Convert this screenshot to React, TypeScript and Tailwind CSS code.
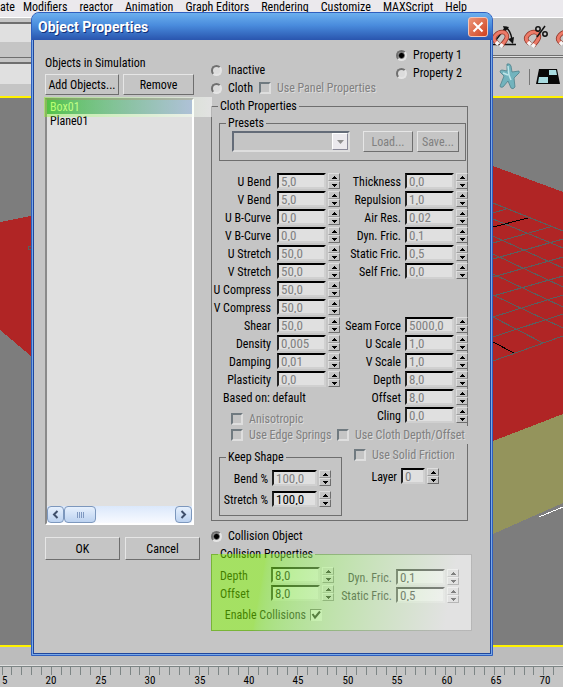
import type { ReactNode } from "react";

const leftFields: [string, string][] = [
  ["U Bend", "5,0"],
  ["V Bend", "5,0"],
  ["U B-Curve", "0,0"],
  ["V B-Curve", "0,0"],
  ["U Stretch", "50,0"],
  ["V Stretch", "50,0"],
  ["U Compress", "50,0"],
  ["V Compress", "50,0"],
  ["Shear", "50,0"],
  ["Density", "0,005"],
  ["Damping", "0,01"],
  ["Plasticity", "0,0"],
];

const frictionFields: [string, string][] = [
  ["Thickness", "0,0"],
  ["Repulsion", "1,0"],
  ["Air Res.", "0,02"],
  ["Dyn. Fric.", "0,1"],
  ["Static Fric.", "0,5"],
  ["Self Fric.", "0,0"],
];

const scaleFields: [string, string][] = [
  ["Seam Force", "5000,0"],
  ["U Scale", "1,0"],
  ["V Scale", "1,0"],
  ["Depth", "8,0"],
  ["Offset", "8,0"],
  ["Cling", "0,0"],
];

const menus = ["Modifiers", "reactor", "Animation", "Graph Editors", "Rendering", "Customize", "MAXScript", "Help"];

const gridLines = [
  "M493 105L563 133", "M493 121L563 150", "M493 138L563 170", "M493 156L563 189",
  "M493 176L563 209", "M493 197L563 230", "M493 219L543 245",
  "M493 115L506 111", "M493 145L550 129", "M493 161L563 141", "M493 179L563 159",
  "M493 198L563 178", "M493 219L563 197", "M493 239L563 216", "M493 263L563 238",
];

function Spinner({ label }: { label: string }) {
  return (
    <span className="flex h-4 w-3 shrink-0 flex-col">
      <button
        type="button"
        aria-label={`Increase ${label}`}
        className="flex h-2 w-full items-center justify-center border border-[#dedede] border-r-[#6e6e6e] border-b-[#9a9a9a]"
      >
        <svg width="5" height="3" viewBox="0 0 5 3" shapeRendering="crispEdges">
          <path d="M2 0h1v1h1v1h1v1H0V2h1V1h1z" />
        </svg>
      </button>
      <button
        type="button"
        aria-label={`Decrease ${label}`}
        className="flex h-2 w-full items-center justify-center border border-[#dedede] border-r-[#6e6e6e] border-b-[#6e6e6e]"
      >
        <svg width="5" height="3" viewBox="0 0 5 3" shapeRendering="crispEdges">
          <path d="M0 0h5v1H4v1H3v1H2V2H1V1H0z" />
        </svg>
      </button>
    </span>
  );
}

type FieldProps = { id: string; label: string; value: string; size?: string; tone?: string; labelClass?: string };

function Field({
  id,
  label,
  value,
  size = "w-[49px]",
  tone = "text-[#808080]",
  labelClass = "flex-1 pr-1 text-right",
}: FieldProps) {
  return (
    <div className="flex h-[18px] items-start">
      <label htmlFor={id} className={`leading-[18px] whitespace-nowrap ${labelClass}`}>
        {label}
      </label>
      <input
        id={id}
        defaultValue={value}
        className={`mr-0.5 h-4 shrink-0 border-2 border-t-black border-r-[#d0d0d0] border-b-[#d0d0d0] border-l-[#222222] bg-[#e0e0e0] pl-0.5 text-[13px] leading-3 outline-none ${size} ${tone}`}
      />
      <Spinner label={label} />
    </div>
  );
}

function Radio({ name, label, checked }: { name: string; label: string; checked?: boolean }) {
  return (
    <label className="flex h-[18px] items-center gap-1.5">
      <input
        type="radio"
        name={name}
        defaultChecked={checked}
        className="size-[11px] shrink-0 appearance-none rounded-full border-2 border-t-[#707070] border-r-[#e4e4e4] border-b-[#e4e4e4] border-l-[#707070] bg-[#dcdcdc] checked:bg-[radial-gradient(circle,#000_0_2px,#dcdcdc_4px)]"
      />
      {label}
    </label>
  );
}

function Check({ label }: { label: string }) {
  return (
    <label className="flex h-[18px] items-center gap-1.5 whitespace-nowrap text-[#808080] [text-shadow:1px_1px_0_#dedede]">
      <input
        type="checkbox"
        className="size-3 shrink-0 appearance-none border-2 border-t-[#707a80] border-r-[#dedede] border-b-[#dedede] border-l-[#707a80] bg-[#c5c5c5]"
      />
      {label}
    </label>
  );
}

function PushButton({ children, className }: { children: ReactNode; className: string }) {
  return (
    <button
      type="button"
      className={`border border-t-[#e6e6e6] border-r-[#6e6e6e] border-b-[#6e6e6e] border-l-[#e6e6e6] text-center whitespace-nowrap ${className}`}
    >
      {children}
    </button>
  );
}

function Group({ title, className, children }: { title: string; className: string; children: ReactNode }) {
  return (
    <fieldset className={`min-w-0 border border-[#6e6e6e] ${className}`}>
      <legend className="ml-1.5 px-0.5 leading-[14px]">{title}</legend>
      {children}
    </fieldset>
  );
}

function Magnet({ x }: { x: number }) {
  return (
    <g transform={`translate(${x} 0)`} fill="none">
      <path d="M8 29L12 24C16 19 13 15 9 15C5 15 -1 20 2 24L5 27" stroke="#8e3324" strokeWidth="4.5" />
      <path d="M8 29L12 24C16 19 13 15 9 15C5 15 -1 20 2 24L5 27" stroke="#ec7a68" strokeWidth="3" />
      <path d="M9.500 27L7.500 30M3 25L5.500 27.500" stroke="#f6f6f6" strokeWidth="3.500" />
    </g>
  );
}

function ToolIcons() {
  return (
    <svg className="absolute top-[17px] left-[493px]" width="70" height="78" viewBox="0 0 70 78">
      <path d="M0 27.500H23M3 23L13 10" stroke="#111" strokeWidth="1.300" />
      <path d="M13 10c4 4 6 9 6 15" stroke="#111" strokeWidth="1.500" fill="none" />
      <path d="M10 9l6 1-4 5zM15 22l6-2-1 7z" fill="#111" />
      <Magnet x={0} />
      <Magnet x={32} />
      <Magnet x={64} />
      <g fill="none" stroke="#111" strokeWidth="1.500">
        <circle cx="45" cy="12" r="2.200" />
        <circle cx="52" cy="17" r="2.200" />
        <path d="M52 9l-8 11" />
      </g>
      <path d="M0 38.500H70" stroke="#6f6f6f" />
      <path d="M0 39.500H70" stroke="#e0e0e0" />
      <path d="M14 47q3-1 4 2l1 6 7-1q1 2-1 3l-4 4 1 9q-2 3-4 1l-3-7-5 6q-3 1-3-1l4-10-4-4q0-2 2-2l5 1z" fill="#72b3bd" stroke="#4f828b" strokeWidth="0.800" />
      <path d="M15 49l1 9 2 5M10 56l5 2" stroke="#bfe6ea" strokeWidth="1.500" fill="none" />
      <path d="M36.500 52V68" stroke="#777" />
      <path d="M46 52H64L67 67H43z" fill="#080808" />
      <path d="M56 53H63L64 58H56zM46 60H55V66H45z" fill="#a8dbe0" />
    </svg>
  );
}

function Workspace() {
  return (
    <div className="relative flex min-h-screen flex-col bg-[#c5c5c5]">
      <nav className="flex h-[17px] shrink-0 gap-3 overflow-hidden bg-[#ebe9ed] leading-[14px]">
        <span className="-mr-1">ate</span>
        {menus.map((m) => (
          <span key={m} className="whitespace-nowrap">{m}</span>
        ))}
      </nav>
      <div className="h-10 shrink-0 border-t border-white pt-1">
        <div className="h-[20px] w-[33px] border-t-2 border-[#6f6f6f] bg-[#e0e0e0]" />
      </div>
      <div className="h-[38px] shrink-0 border-t border-[#6f6f6f] pt-1">
        <div className="h-[22px] w-[33px] border-t-2 border-[#6f6f6f] bg-[#e0e0e0]" />
      </div>
      <div className="relative mt-px flex-1 border-y-2 border-[#fff200] bg-[#7d7d7d]">
        <svg className="absolute inset-0 size-full" viewBox="0 0 563 547" preserveAspectRatio="xMinYMin slice" shapeRendering="crispEdges">
          <path d="M0 124L31 118V258L0 232z" fill="#b02525" />
          <path d="M493 68L563 94V316L493 343z" fill="#b02525" />
          <path d="M493 343L563 316V405L493 436z" fill="#94945c" />
          <path d="M539 419L563 409" stroke="#fff" />
          <path d={gridLines.join("")} stroke="#596060" fill="none" />
          <path d="M493 129L528 120M493 244L514 255" stroke="#000" />
          <circle cx="30" cy="150" r="2" stroke="#596060" fill="none" />
        </svg>
      </div>
      <div className="h-10 shrink-0 bg-[#bcbcbc] pt-[18px]">
        <div className="border-t border-[#e0e0e0] bg-[#c5c5c5] shadow-[inset_0_1px_0_#7d8585]">
          <svg width="100%" height="21" className="block">
            {Array.from({ length: 90 }, (_, i) => (
              <path key={i} d={`M${Math.round(1.5 + i * 9.85)}.5 1V9`} stroke="#7d8585" shapeRendering="crispEdges" />
            ))}
            {Array.from({ length: 12 }, (_, i) => (
              <text key={i} x={Math.round(2 + i * 49.4)} y="18" textAnchor={i ? "middle" : "start"} fontSize="11">
                {i ? 15 + i * 5 : "5"}
              </text>
            ))}
          </svg>
        </div>
      </div>
      <ToolIcons />
    </div>
  );
}

function ObjectsColumn() {
  return (
    <div className="flex w-[156px] shrink-0 flex-col pt-3.5 pb-[71px]">
      <h2 className="leading-[18px]">Objects in Simulation</h2>
      <div className="mt-0.5 flex gap-1">
        <PushButton className="h-[21px] w-[74px]">Add Objects...</PushButton>
        <PushButton className="h-[21px] w-[71px]">Remove</PushButton>
      </div>
      <div className="relative mt-[3px] mr-[7px] flex flex-1 flex-col border-2 border-t-[#6e6e6e] border-r-white border-b-white border-l-[#8a8a8a] bg-[#e0e0e0]">
        <ul role="listbox" aria-label="Objects in Simulation" className="flex-1 leading-[14px]">
          <li role="option" aria-selected="true" className="bg-linear-to-r from-[#2f9a5c] to-[#6c86c0] pl-[3px] text-[#d4ff9a]">
            Box01
          </li>
          <li role="option" aria-selected="false" className="pl-[3px]">Plane01</li>
        </ul>
        <div className="flex h-[17px] shrink-0 bg-linear-to-b from-[#dbe8fb] to-[#f8faff]">
          <button type="button" aria-label="Scroll left" className="flex w-[17px] items-center justify-center rounded-sm border border-[#7c97bd] bg-linear-to-b from-[#e6f0fd] to-[#bcd2f0]">
            <svg width="7" height="9" viewBox="0 0 7 9"><path d="M5.500 1L2 4.500 5.500 8" fill="none" stroke="#3f4f6b" strokeWidth="2" /></svg>
          </button>
          <div className="flex w-8 items-center justify-center gap-px rounded-sm border border-[#7c97bd] bg-linear-to-b from-[#e6f0fd] to-[#bcd2f0]">
            {[0, 1, 2, 3].map((n) => (
              <span key={n} className="h-1.5 w-px bg-[#7f98c0]" />
            ))}
          </div>
          <button type="button" aria-label="Scroll right" className="ml-auto flex w-[17px] items-center justify-center rounded-sm border border-[#7c97bd] bg-linear-to-b from-[#e6f0fd] to-[#bcd2f0]">
            <svg width="7" height="9" viewBox="0 0 7 9"><path d="M1.500 1L5 4.500 1.500 8" fill="none" stroke="#3f4f6b" strokeWidth="2" /></svg>
          </button>
        </div>
        <div className="pointer-events-none absolute -top-[3px] -left-[3px] h-5 w-[168px] bg-linear-to-r from-[#84fc00]/40 to-white/50" />
      </div>
      <div className="mt-3 flex gap-[5px]">
        <PushButton className="h-[23px] w-[75px]">OK</PushButton>
        <PushButton className="h-[23px] w-[75px]">Cancel</PushButton>
      </div>
    </div>
  );
}

function ClothProperties() {
  return (
    <Group title="Cloth Properties" className="mt-0.5 mr-1 pb-1">
      <Group title="Presets" className="mt-[3px] mr-px ml-[7px] pb-2">
        <div className="flex items-start pt-px pl-3">
          <div className="relative mr-[13px] h-[21px] w-[118px] border-2 border-t-[#646c78] border-r-[#dedede] border-b-[#dedede] border-l-[#646c78]">
            <select aria-label="Presets" className="block size-full appearance-none bg-transparent outline-none" />
            <span className="pointer-events-none absolute inset-y-0 right-0 flex w-4 items-center justify-center border border-white border-r-[#8a8a9a] border-b-[#8a8a9a] bg-[#ebe9ed]">
              <svg width="7" height="4" viewBox="0 0 7 4"><path d="M0 0H7L3.500 4z" fill="#8f8f8f" /></svg>
            </span>
          </div>
          <PushButton className="mr-1 h-[21px] w-[50px] text-[#808080]">Load...</PushButton>
          <PushButton className="h-[21px] w-[42px] text-[#808080]">Save...</PushButton>
        </div>
      </Group>
      <div className="mt-3 -mr-px flex">
        <div className="w-[128px]">
          {leftFields.map(([label, value]) => (
            <Field key={label} id={`cloth-${label}`} label={label} value={value} labelClass="flex-1 pr-1.5 text-right" />
          ))}
          <p className="pl-[11px] leading-[18px]">Based on: default</p>
          <div className="pt-[3px] pl-[19px]"><Check label="Anisotropic" /></div>
        </div>
        <div className="flex-1">
          {frictionFields.map(([label, value]) => (
            <Field key={label} id={`cloth-${label}`} label={label} value={value} />
          ))}
          <div className="pt-9">
            {scaleFields.map(([label, value]) => (
              <Field key={label} id={`cloth-${label}`} label={label} value={value} />
            ))}
          </div>
        </div>
      </div>
      <div className="-mt-0.5 -mr-0.5 flex">
        <div className="ml-[19px] w-[106px] shrink-0"><Check label="Use Edge Springs" /></div>
        <div className="flex-1 bg-[#c5c5c5]"><Check label="Use Cloth Depth/Offset" /></div>
      </div>
      <div className="flex items-start">
        <Group title="Keep Shape" className="mt-1.5 ml-[7px] w-[123px] pb-1.5">
          <div className="flex flex-col gap-[3px] pt-1.5 pr-2.5">
            <Field id="bend" label="Bend %" value="100,0" size="w-[45px]" />
            <Field id="stretch" label="Stretch %" value="100,0" size="w-[45px]" tone="text-black" />
          </div>
        </Group>
        <div className="flex-1 pt-[2px] pl-3">
          <Check label="Use Solid Friction" />
          <div className="pt-1 pr-7"><Field id="layer" label="Layer" value="0" size="w-6" /></div>
        </div>
      </div>
    </Group>
  );
}

function CollisionProperties() {
  return (
    <div className="relative">
      <Group title="Collision Properties" className="pb-1.5">
        <div className="flex pt-1.5">
          <div className="w-[122px] pl-2">
            <Field id="collision-depth" label="Depth" value="8,0" tone="text-black" labelClass="flex-1" />
            <Field id="collision-offset" label="Offset" value="8,0" tone="text-black" labelClass="flex-1" />
          </div>
          <div className="w-[125px] pt-0.5">
            <Field id="collision-dynamic" label="Dyn. Fric." value="0,1" tone="text-black" />
            <Field id="collision-static" label="Static Fric." value="0,5" tone="text-black" />
          </div>
        </div>
        <label className="mt-px flex h-[18px] w-[110px] items-center justify-end gap-1">
          Enable Collisions
          <span className="grid size-3">
            <input
              type="checkbox"
              defaultChecked
              className="peer col-start-1 row-start-1 size-3 appearance-none border border-t-[#555555] border-r-[#dedede] border-b-[#dedede] border-l-[#555555] bg-[#e0e0e0]"
            />
            <svg viewBox="0 0 12 12" className="pointer-events-none invisible col-start-1 row-start-1 size-3 peer-checked:visible">
              <path d="M2.500 5L5 8.500 10 2.500" fill="none" stroke="#000" strokeWidth="2" />
            </svg>
          </span>
        </label>
      </Group>
      <div className="pointer-events-none absolute inset-x-0 top-[7px] bottom-0 bg-linear-[100deg] from-[#84fc00]/50 from-20% to-white/50 to-90%" />
    </div>
  );
}

export default function App() {
  return (
    <div className="relative overflow-hidden text-[12px] text-black font-['Roboto_Condensed','Roboto',sans-serif]">
      <Workspace />
      <section
        role="dialog"
        aria-label="Object Properties"
        className="absolute top-3 left-[31px] w-[462px] rounded-t-lg border border-[#2f5fbf] bg-[#7aa9e6] px-px pb-px"
      >
        <header className="-mx-px flex h-[27px] items-center justify-between rounded-t-[7px] bg-linear-to-b from-[#6cb0ee] via-[#4a8cdd] via-45% to-[#2a55ae] pr-1 pl-1.5">
          <h1 className="text-[14px] leading-4 font-bold text-white font-['Roboto'] [text-shadow:1px_1px_0_#12307a]">Object Properties</h1>
          <button
            type="button"
            aria-label="Close"
            className="flex size-5 items-center justify-center rounded-[3px] border border-[#f3c6b8] bg-linear-to-br from-[#eb9578] to-[#cf3d18]"
          >
            <svg width="12" height="12" viewBox="0 0 12 12"><path d="M1.500 1.500l9 9M10.500 1.500l-9 9" stroke="#fff" strokeWidth="2" /></svg>
          </button>
        </header>
        <div className="flex gap-2.5 border border-t-0 border-[#20479c] bg-[#c5c5c5] pr-[18px] pb-[22px] pl-[11px]">
          <ObjectsColumn />
          <div className="flex-1 pt-1.5">
            <div className="flex items-end justify-between pr-2.5">
              <div>
                <Radio name="kind" label="Inactive" />
                <div className="flex gap-1.5">
                  <Radio name="mode" label="Cloth" />
                  <Check label="Use Panel Properties" />
                </div>
              </div>
              <div className="pb-[15px]">
                <Radio name="property" label="Property 1" checked />
                <Radio name="property" label="Property 2" />
              </div>
            </div>
            <ClothProperties />
            <div className="mt-1.5 mb-0.5"><Radio name="collision" label="Collision Object" checked /></div>
            <CollisionProperties />
          </div>
        </div>
      </section>
    </div>
  );
}
